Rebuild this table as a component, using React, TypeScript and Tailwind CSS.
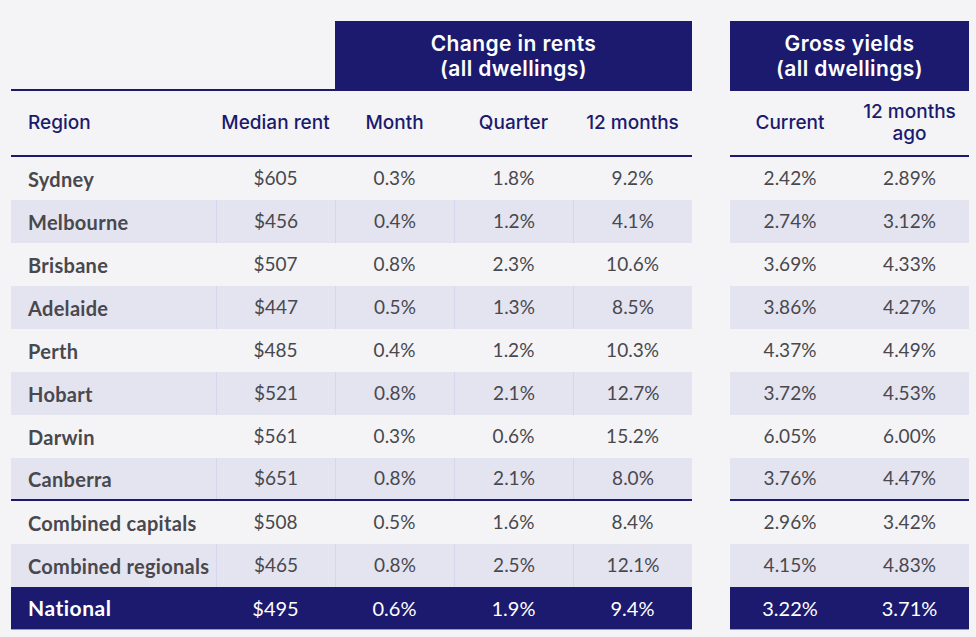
import React from "react";

type Row = { name: string; vals: string[]; shaded: boolean; sep?: boolean };

const rows: Row[] = [
  { name: "Sydney", vals: ["$605", "0.3%", "1.8%", "9.2%", "2.42%", "2.89%"], shaded: false },
  { name: "Melbourne", vals: ["$456", "0.4%", "1.2%", "4.1%", "2.74%", "3.12%"], shaded: true },
  { name: "Brisbane", vals: ["$507", "0.8%", "2.3%", "10.6%", "3.69%", "4.33%"], shaded: false },
  { name: "Adelaide", vals: ["$447", "0.5%", "1.3%", "8.5%", "3.86%", "4.27%"], shaded: true },
  { name: "Perth", vals: ["$485", "0.4%", "1.2%", "10.3%", "4.37%", "4.49%"], shaded: false },
  { name: "Hobart", vals: ["$521", "0.8%", "2.1%", "12.7%", "3.72%", "4.53%"], shaded: true },
  { name: "Darwin", vals: ["$561", "0.3%", "0.6%", "15.2%", "6.05%", "6.00%"], shaded: false },
  { name: "Canberra", vals: ["$651", "0.8%", "2.1%", "8.0%", "3.76%", "4.47%"], shaded: true, sep: true },
  { name: "Combined capitals", vals: ["$508", "0.5%", "1.6%", "8.4%", "2.96%", "3.42%"], shaded: false },
  { name: "Combined regionals", vals: ["$465", "0.8%", "2.5%", "12.1%", "4.15%", "4.83%"], shaded: true },
];

const national = { name: "National", vals: ["$495", "0.6%", "1.9%", "9.4%", "3.22%", "3.71%"] };

const head = { fontFamily: "Inter, 'DejaVu Sans', sans-serif" };
const body = { fontFamily: "Lato, 'Liberation Sans', sans-serif" };

function rowCls(r: Row) {
  return (
    "flex h-[43px] box-border items-center " +
    (r.shaded ? "bg-[#e4e3f0] " : "") +
    (r.sep ? "border-b-2 border-[#1b1a6e] " : "")
  );
}

export default function App() {
  return (
    <div
      className="w-[976px] h-[637px] bg-[#f4f4f6] overflow-hidden pt-[21px] pl-[11px] flex gap-[38px]"
      style={body}
    >
      {/* Left table */}
      <div className="w-[681px] flex flex-col">
        <div className="flex h-[70px]">
          <div className="w-[324px] box-border border-b-2 border-[#1b1a6e]" />
          <div
            className="w-[357px] bg-[#1b1a6e] text-white flex flex-col items-center justify-center text-[21px] font-semibold leading-[25px] tracking-[0.4px]"
            style={head}
          >
            <span>Change in rents</span>
            <span>(all dwellings)</span>
          </div>
        </div>
        <div
          className="flex h-[66px] box-border border-b-2 border-[#1b1a6e] items-center text-[#1b1a6e] text-[19px] font-medium"
          style={head}
        >
          <div className="w-[205px] pl-[17px]">Region</div>
          <div className="w-[119px] text-center">Median rent</div>
          <div className="w-[119px] text-center">Month</div>
          <div className="w-[119px] text-center">Quarter</div>
          <div className="w-[119px] text-center">12 months</div>
        </div>
        {rows.map((r) => (
          <div key={r.name} className={rowCls(r) + "text-[#48484d] text-[19px]"}>
            <div className="w-[205px] h-full flex items-center pl-[17px] font-bold text-[20px] tracking-[0.3px]">
              {r.name}
            </div>
            {r.vals.slice(0, 4).map((v, i) => (
              <div
                key={i}
                className={
                  "w-[119px] h-full flex items-center justify-center " +
                  (r.shaded ? "border-l border-[#d6d4f0]" : "")
                }
              >
                {v}
              </div>
            ))}
          </div>
        ))}
        <div className="flex h-[43px] items-center bg-[#1b1a6e] text-white text-[20px] border-b border-[#9a99c8] box-border">
          <div className="w-[205px] pl-[17px] font-bold text-[21px] tracking-[0.5px]">{national.name}</div>
          {national.vals.slice(0, 4).map((v, i) => (
            <div key={i} className="w-[119px] text-center">
              {v}
            </div>
          ))}
        </div>
      </div>

      {/* Right table */}
      <div className="w-[239px] flex flex-col">
        <div
          className="h-[70px] bg-[#1b1a6e] text-white flex flex-col items-center justify-center text-[21px] font-semibold leading-[25px] tracking-[0.4px]"
          style={head}
        >
          <span>Gross yields</span>
          <span>(all dwellings)</span>
        </div>
        <div
          className="flex h-[66px] box-border border-b-2 border-[#1b1a6e] items-center text-[#1b1a6e] text-[19px] font-medium"
          style={head}
        >
          <div className="w-[120px] text-center">Current</div>
          <div className="w-[119px] text-center leading-[22px]">
            12 months
            <br />
            ago
          </div>
        </div>
        {rows.map((r) => (
          <div key={r.name} className={rowCls(r) + "text-[#48484d] text-[19px]"}>
            <div className="w-[120px] text-center">{r.vals[4]}</div>
            <div className="w-[119px] text-center">{r.vals[5]}</div>
          </div>
        ))}
        <div className="flex h-[43px] items-center bg-[#1b1a6e] text-white text-[20px] border-b border-[#9a99c8] box-border">
          <div className="w-[120px] text-center">{national.vals[4]}</div>
          <div className="w-[119px] text-center">{national.vals[5]}</div>
        </div>
      </div>
    </div>
  );
}
